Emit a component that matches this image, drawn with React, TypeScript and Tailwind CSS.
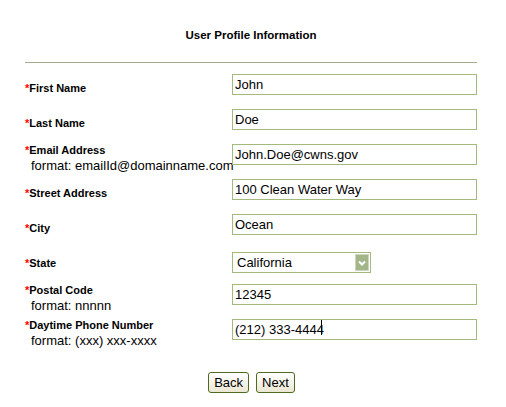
import type { ReactNode } from 'react'

type Field = {
  label: string
  value: string
  format?: string
  kind?: 'text' | 'select'
  caret?: boolean
}

const fields: Field[] = [
  { label: 'First Name', value: 'John' },
  { label: 'Last Name', value: 'Doe' },
  { label: 'Email Address', value: 'John.Doe@cwns.gov', format: 'format: emailId@domainname.com' },
  { label: 'Street Address', value: '100 Clean Water Way' },
  { label: 'City', value: 'Ocean' },
  { label: 'State', value: 'California', kind: 'select' },
  { label: 'Postal Code', value: '12345', format: 'format: nnnnn' },
  { label: 'Daytime Phone Number', value: '(212) 333-4444', format: 'format: (xxx) xxx-xxxx', caret: true },
]

function Label({ field }: { field: Field }) {
  return (
    <div className="w-[207px] h-[32px] flex flex-col justify-center shrink-0 whitespace-nowrap">
      <div className="text-[11px] leading-[15px] font-bold text-black">
        <span className="text-[#ff0000]">*</span>
        {field.label}
      </div>
      {field.format && (
        <div className="text-[13px] leading-[15px] text-black pl-[6px]">{field.format}</div>
      )}
    </div>
  )
}

function TextBox({ field }: { field: Field }) {
  return (
    <div className="relative w-[245px] h-[21px]">
      <input
        type="text"
        readOnly
        value={field.value}
        className="w-full h-full border border-[#a4b97c] bg-white pl-[2px] text-[13px] text-black outline-none"
      />
      {field.caret && <span className="absolute left-[89px] top-[3px] w-px h-[15px] bg-black" />}
    </div>
  )
}

function StateSelect({ field }: { field: Field }) {
  return (
    <div className="relative w-[139px] h-[21px] mt-[5px] border border-[#a4b97c] bg-white">
      <div className="h-full pl-[4px] text-[13px] leading-[19px] text-black">{field.value}</div>
      <div className="absolute right-px top-px w-[14px] h-[17px] bg-[#a3b68a] border border-[#cbd6ba] flex items-center justify-center">
        <svg width="8" height="6" viewBox="0 0 8 6">
          <path d="M1 1.5 L4 4.5 L7 1.5" stroke="#fff" strokeWidth="2" fill="none" />
        </svg>
      </div>
    </div>
  )
}

function Button({ children }: { children: ReactNode }) {
  return (
    <button className="h-[21px] px-[5px] rounded-[3px] border border-[#4d6a1f] bg-gradient-to-b from-white to-[#ebe7d3] text-[13px] leading-[19px] text-black">
      {children}
    </button>
  )
}

export default function App() {
  return (
    <div className="w-[506px] h-[407px] bg-white font-['Liberation_Sans',Arial,sans-serif]">
      <div className="pl-[25px] w-[477px]">
        <div className="pt-[28px] h-[62px] text-center text-[11.5px] leading-[14px] font-bold text-black">
          User Profile Information
        </div>
        <div className="h-px bg-[#aca78f]" />
        <div className="pt-[9px]">
          {fields.map((f) => (
            <div key={f.label} className="flex h-[35px]">
              <Label field={f} />
              {f.kind === 'select' ? <StateSelect field={f} /> : <TextBox field={f} />}
            </div>
          ))}
        </div>
        <div className="flex justify-center gap-[7px] pt-[20px] pl-[1px]">
          <Button>Back</Button>
          <Button>Next</Button>
        </div>
      </div>
    </div>
  )
}
